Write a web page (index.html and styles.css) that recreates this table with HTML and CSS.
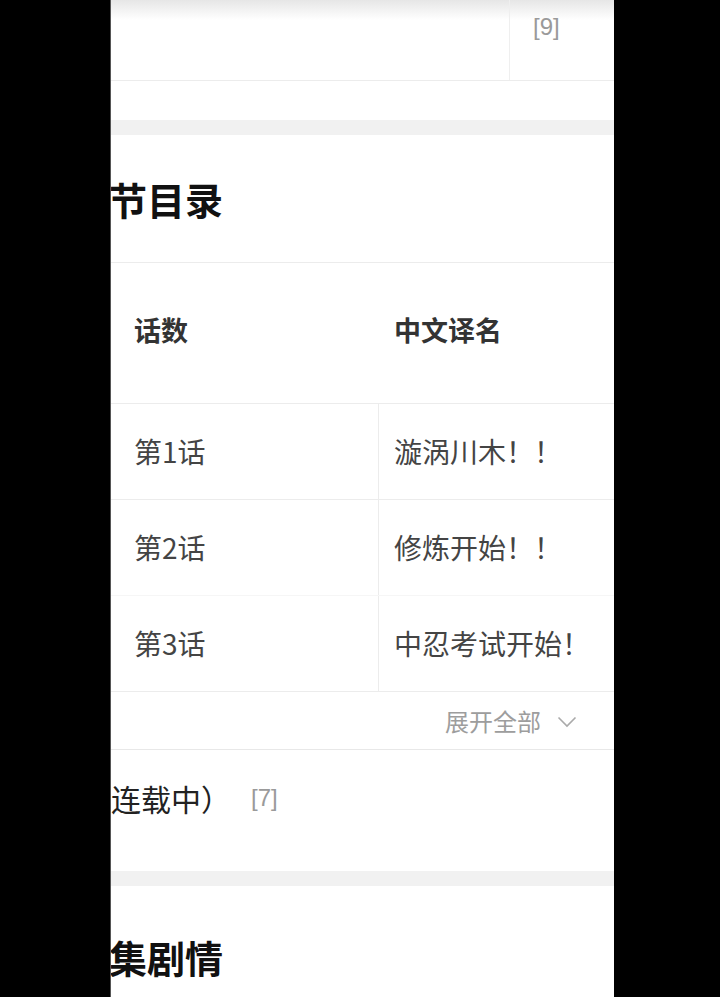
FILE: index.html
```html
<!DOCTYPE html>
<html lang="zh">
<head>
<meta charset="utf-8">
<link rel="stylesheet" href="styles.css">
</head>
<body>
<div class="screen">
  <div class="phone">
    <div class="top-row">
      <div class="top-left"></div>
      <div class="top-right"><span class="count">[9]</span></div>
    </div>
    <div class="spacer"></div>
    <div class="band"></div>
    <section class="card">
      <h2 class="title">节目录</h2>
      <div class="table">
        <div class="thead">
          <div class="cell c1">话数</div>
          <div class="cell c2">中文译名</div>
        </div>
        <div class="row">
          <div class="cell c1">第1话</div>
          <div class="cell c2">漩涡川木！！</div>
        </div>
        <div class="row noline">
          <div class="cell c1">第2话</div>
          <div class="cell c2">修炼开始！！</div>
        </div>
        <div class="row">
          <div class="cell c1">第3话</div>
          <div class="cell c2">中忍考试开始！</div>
        </div>
      </div>
      <div class="expand">
        <span>展开全部</span>
        <svg class="chev" width="20" height="12" viewBox="0 0 20 12"><path d="M1.5 1.5 L10 10 L18.5 1.5" fill="none" stroke="#aaa" stroke-width="1.6"/></svg>
      </div>
      <div class="serial"><span class="serial-text">连载中）</span><span class="count small">[7]</span></div>
    </section>
    <div class="band"></div>
    <section class="card">
      <h2 class="title second">集剧情</h2>
    </section>
  </div>
</div>
</body>
</html>
```
FILE: styles.css
```css
html, body {
  margin: 0;
  padding: 0;
  background: #000;
}
.screen {
  display: flex;
  height: 997px;
  overflow: hidden;
}
.phone {
  margin-left: 110px;
  width: 504px;
  background: #fff;
  border-left: 1px solid #555;
  box-sizing: border-box;
  font-family: "Noto Sans CJK SC", "Noto Sans", sans-serif;
  overflow: hidden;
}
.top-row {
  display: grid;
  grid-template-columns: 399px 1fr;
  height: 80px;
  border-bottom: 1px solid #ececec;
  background: linear-gradient(#e6e6e6 0, #f5f5f5 12px, #fff 20px, #fff 100%);
}
.top-left {
  border-right: 1px solid #efefef;
}
.top-right {
  padding-left: 23px;
  padding-top: 11px;
}
.count {
  color: #9a9a9a;
  font-family: "Liberation Sans", "Noto Sans", sans-serif;
  font-size: 24px;
  line-height: 32px;
}
.spacer {
  height: 39px;
}
.band {
  height: 15px;
  background: #f1f1f1;
}
.card {
  background: #fff;
}
.title {
  margin: 0 0 0 -2px;
  height: 127px;
  display: flex;
  align-items: center;
  font-size: 38px;
  font-weight: 700;
  color: #111;
  border-bottom: 1px solid #ececec;
}
.title.second {
  height: auto;
  padding-top: 46px;
  border-bottom: 0;
  line-height: 50px;
}
.thead {
  display: grid;
  grid-template-columns: 268px 1fr;
  height: 140px;
  border-bottom: 1px solid #ececec;
  align-items: center;
}
.thead .cell {
  font-weight: 700;
  font-size: 27px;
  color: #333;
  padding-bottom: 8px;
}
.row {
  display: grid;
  grid-template-columns: 268px 1fr;
  height: 95px;
  border-bottom: 1px solid #ececec;
}
.row.noline {
  border-bottom-color: #f6f6f6;
}
.row .cell {
  display: flex;
  align-items: center;
  font-size: 28px;
  color: #444;
  padding-bottom: 2px;
}
.row .c1 {
  border-right: 1px solid #ececec;
}
.cell.c1 {
  padding-left: 23px;
}
.cell.c2 {
  padding-left: 15px;
  white-space: nowrap;
}
.expand {
  display: flex;
  justify-content: flex-end;
  align-items: center;
  gap: 16px;
  height: 57px;
  padding-right: 37px;
  border-bottom: 1px solid #e8e8e8;
  color: #9d9d9d;
  font-size: 24px;
}
.chev {
  margin-top: 2px;
}
.serial {
  height: 121px;
  display: flex;
  align-items: flex-start;
  gap: 20px;
  padding-top: 26px;
  box-sizing: border-box;
}
.serial-text {
  font-size: 30px;
  color: #222;
  line-height: 44px;
  white-space: nowrap;
}
.count.small {
  font-size: 24px;
  line-height: 44px;
}
```
